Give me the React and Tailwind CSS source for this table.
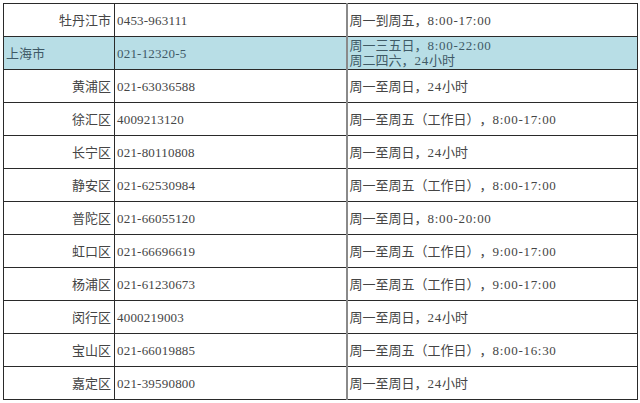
import React from "react";

const rows = [
  { name: "牡丹江市", phone: "0453-963111", hours: ["周一到周五，8:00-17:00"] },
  { name: "上海市", phone: "021-12320-5", hours: ["周一三五日，8:00-22:00", "周二四六，24小时"], hl: true },
  { name: "黄浦区", phone: "021-63036588", hours: ["周一至周日，24小时"] },
  { name: "徐汇区", phone: "4009213120", hours: ["周一至周五（工作日），8:00-17:00"] },
  { name: "长宁区", phone: "021-80110808", hours: ["周一至周日，24小时"] },
  { name: "静安区", phone: "021-62530984", hours: ["周一至周五（工作日），8:00-17:00"] },
  { name: "普陀区", phone: "021-66055120", hours: ["周一至周日，8:00-20:00"] },
  { name: "虹口区", phone: "021-66696619", hours: ["周一至周五（工作日），9:00-17:00"] },
  { name: "杨浦区", phone: "021-61230673", hours: ["周一至周五（工作日），9:00-17:00"] },
  { name: "闵行区", phone: "4000219003", hours: ["周一至周日，24小时"] },
  { name: "宝山区", phone: "021-66019885", hours: ["周一至周五（工作日），8:00-16:30"] },
  { name: "嘉定区", phone: "021-39590800", hours: ["周一至周日，24小时"] },
];

function Mixed({ text }) {
  const parts = text.split(/([0-9:\-]+)/);
  return (
    <>
      {parts.map((p, i) =>
        /^[0-9:\-]+$/.test(p) ? (
          <span key={i} className="tracking-[0.7px]">
            {p}
          </span>
        ) : (
          <span key={i}>{p}</span>
        )
      )}
    </>
  );
}

export default function App() {
  return (
    <div
      className="w-[640px] h-[403px] bg-white pt-[3px] pl-[3px] text-[13px] text-[#454545] leading-[15px] [text-spacing-trim:space-all]"
      style={{ fontFamily: '"Liberation Serif", "Noto Sans CJK SC", serif' }}
    >
      <table className="border-collapse table-fixed w-[634px] border-[1.5px] border-[#2a2a2a]">
        <colgroup>
          <col className="w-[111px]" />
          <col className="w-[232px]" />
          <col className="w-[291px]" />
        </colgroup>
        <tbody>
          {rows.map((r, i) => (
            <tr
              key={i}
              className={`h-[33px] ${r.hl ? "bg-[#b8dee6] text-[#3f5a66]" : ""}`}
            >
              <td
                className={`border border-[#2a2a2a] p-0 align-middle ${
                  r.hl ? "text-left pl-[2px]" : "text-right pr-[3px]"
                }`}
              >
                {r.name}
              </td>
              <td className="border-y border-l border-[#2a2a2a] border-r-[2px] border-r-[#8a8a8a] p-0 pl-[2px] align-middle tracking-[0.2px]">
                {r.phone}
              </td>
              <td className="border border-[#2a2a2a] p-0 pl-[2px] align-middle">
                {r.hours.map((h, j) => (
                  <div key={j}>
                    <Mixed text={h} />
                  </div>
                ))}
              </td>
            </tr>
          ))}
        </tbody>
      </table>
    </div>
  );
}
